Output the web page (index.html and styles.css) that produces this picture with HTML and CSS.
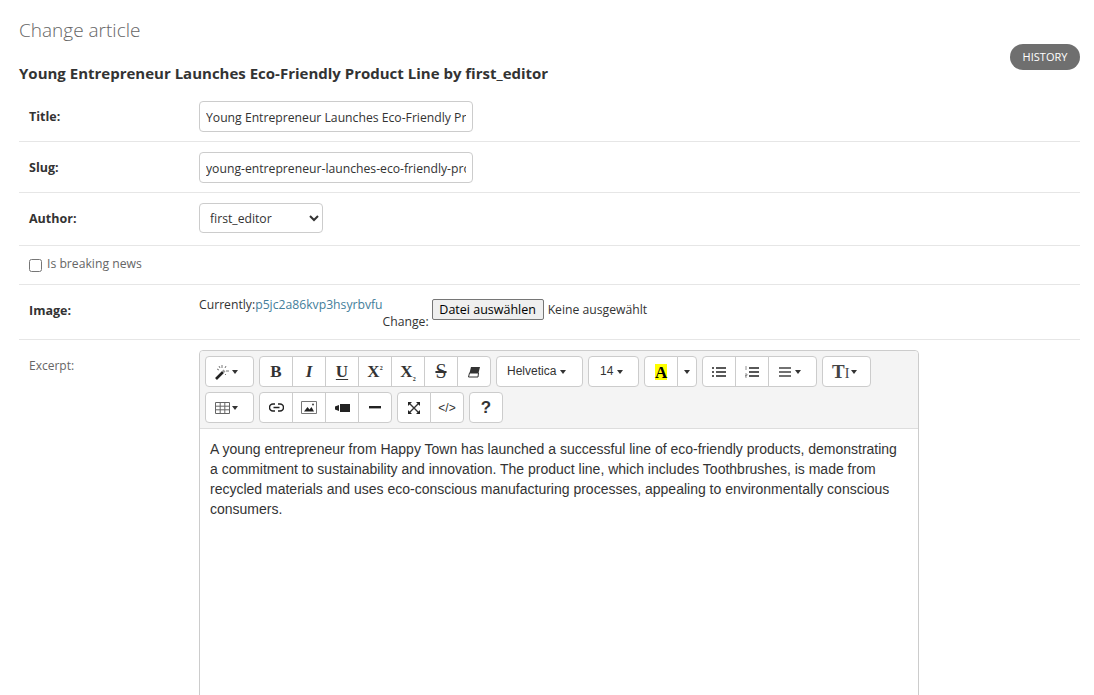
FILE: index.html
```html
<!DOCTYPE html>
<html lang="en">
<head>
    <meta charset="UTF-8">
    <meta name="viewport" content="width=device-width, initial-scale=1.0">
    <title>Change article</title>
    <link rel="stylesheet" href="styles.css">
</head>
<body>
    <main class="content">
        <h1>Change article</h1>
        <div class="object-head">
            <h2>Young Entrepreneur Launches Eco-Friendly Product Line by first_editor</h2>
            <a class="history" href="#">HISTORY</a>
        </div>
        <form>
            <div class="row">
                <label class="required" for="title">Title:</label>
                <input class="text-input" type="text" id="title" value="Young Entrepreneur Launches Eco-Friendly Product Line">
            </div>
            <div class="row">
                <label class="required" for="slug">Slug:</label>
                <input class="text-input" type="text" id="slug" value="young-entrepreneur-launches-eco-friendly-product-line">
            </div>
            <div class="row row-author">
                <label class="required" for="author">Author:</label>
                <select class="select-input" id="author">
                    <option>first_editor</option>
                </select>
            </div>
            <div class="row row-check">
                <input type="checkbox" id="breaking">
                <label for="breaking">Is breaking news</label>
            </div>
            <div class="row row-image">
                <label class="required">Image:</label>
                <div class="file-field">
                    <span class="current">Currently:</span><a class="current" href="#">p5jc2a86kvp3hsyrbvfu</a>
                    <span class="change">Change:</span>
                    <button class="file-button" type="button">Datei auswählen</button>
                    <span class="file-name">Keine ausgewählt</span>
                </div>
            </div>
            <div class="row row-excerpt">
                <label>Excerpt:</label>
                <div class="editor">
                    <div class="toolbar">
                        <div class="btn-group">
                            <button class="btn btn-wide" type="button">
                                <svg width="15" height="16" viewBox="0 0 15 16"><path d="M1 15 8 8" stroke="#222" stroke-width="2.600"/><path d="M8 8 9.500 6.500" stroke="#999" stroke-width="2.600"/><path d="M7 1v3M11 2l-1 2M11 7h3M2 5l2 1M10 10l1 1M4 2l1 2" stroke="#777" stroke-width="1"/></svg>
                                <i class="caret"></i>
                            </button>
                        </div>
                        <div class="btn-group">
                            <button class="btn glyph" type="button"><b>B</b></button>
                            <button class="btn glyph" type="button"><b><i>I</i></b></button>
                            <button class="btn glyph" type="button"><b class="under">U</b></button>
                            <button class="btn glyph" type="button"><b>X<sup>2</sup></b></button>
                            <button class="btn glyph" type="button"><b>X<sub>2</sub></b></button>
                            <button class="btn glyph" type="button"><span class="strike">S</span></button>
                            <button class="btn" type="button">
                                <svg width="14" height="12" viewBox="0 0 14 12"><path d="M4 1h9l-1.500 6H2.500z" fill="#333"/><path d="M2.500 7h9L11 11H1.500z" fill="#fff" stroke="#333"/></svg>
                            </button>
                        </div>
                        <div class="btn-group">
                            <button class="btn btn-font" type="button"><span class="btn-label">Helvetica</span> <i class="caret"></i></button>
                        </div>
                        <div class="btn-group">
                            <button class="btn btn-size" type="button"><span class="btn-label">14</span> <i class="caret"></i></button>
                        </div>
                        <div class="btn-group">
                            <button class="btn glyph" type="button"><b class="hilite">A</b></button>
                            <button class="btn btn-more" type="button"><i class="caret"></i></button>
                        </div>
                        <div class="btn-group">
                            <button class="btn" type="button">
                                <svg width="14" height="12" viewBox="0 0 14 12"><path d="M0 2h2M0 6h2M0 10h2M4 2h10M4 6h10M4 10h10" stroke="#222" stroke-width="1.600"/></svg>
                            </button>
                            <button class="btn" type="button">
                                <svg width="14" height="12" viewBox="0 0 14 12"><path d="M4 2h10M4 6h10M4 10h10" stroke="#222" stroke-width="1.600"/><path d="M1 0v4M0 8h2v1.500H0V11h2" stroke="#777" stroke-width=".8" fill="none"/></svg>
                            </button>
                            <button class="btn btn-align" type="button">
                                <svg width="12" height="10" viewBox="0 0 12 10"><path d="M0 1h12M0 5h12M0 9h12" stroke="#444" stroke-width="1.500"/></svg>
                                <i class="caret"></i>
                            </button>
                        </div>
                        <div class="btn-group">
                            <button class="btn btn-wide glyph" type="button"><span class="t-height">T<small>I</small></span> <i class="caret"></i></button>
                        </div>
                        <div class="btn-group">
                            <button class="btn btn-wide" type="button">
                                <svg width="15" height="12" viewBox="0 0 15 12"><path d="M.5.500h14v11H.5zM.5 4.200h14M.5 7.800h14M5.200.500v11M9.800.500v11" fill="none" stroke="#666"/></svg>
                                <i class="caret"></i>
                            </button>
                        </div>
                        <div class="btn-group">
                            <button class="btn" type="button">
                                <svg width="15" height="9" viewBox="0 0 15 9"><path d="M6 1H4a3.500 3.500 0 0 0 0 7h2M9 1h2a3.500 3.500 0 0 1 0 7H9M4.500 4.500h6" fill="none" stroke="#222" stroke-width="1.500"/></svg>
                            </button>
                            <button class="btn" type="button">
                                <svg width="16" height="13" viewBox="0 0 16 13"><path d="M.5.500h15v12H.5z" fill="none" stroke="#777"/><path d="M3 10.500 6.500 6l2 2.500L10.500 6l2.500 4.500z" fill="#222"/><circle cx="12" cy="3.500" r="1" fill="#444"/></svg>
                            </button>
                            <button class="btn" type="button">
                                <svg width="15" height="8" viewBox="0 0 15 8"><rect x="5" width="10" height="8" fill="#222"/><path d="M0 2.500 4 1v6L0 5.500z" fill="#222"/></svg>
                            </button>
                            <button class="btn" type="button">
                                <svg width="12" height="3" viewBox="0 0 12 3"><rect width="12" height="2.400" fill="#222"/></svg>
                            </button>
                        </div>
                        <div class="btn-group">
                            <button class="btn" type="button">
                                <svg width="12" height="12" viewBox="0 0 12 12"><path d="M1.500 1.500l9 9M10.500 1.500l-9 9" stroke="#333" stroke-width="1.400"/><path d="M0 0h4L0 4zM12 0H8l4 4zM0 12h4l-4-4zM12 12H8l4-4z" fill="#222"/></svg>
                            </button>
                            <button class="btn code" type="button">&lt;/&gt;</button>
                        </div>
                        <div class="btn-group">
                            <button class="btn help" type="button">?</button>
                        </div>
                    </div>
                    <div class="editable">
                        A young entrepreneur from Happy Town has launched a successful line of eco-friendly products, demonstrating a commitment to sustainability and innovation. The product line, which includes Toothbrushes, is made from recycled materials and uses eco-conscious manufacturing processes, appealing to environmentally conscious consumers.
                    </div>
                </div>
            </div>
        </form>
    </main>
</body>
</html>
```

FILE: styles.css
```css
html, body {
    height: 695px;
    overflow: hidden;
}

body {
    margin: 0;
    background: #fff;
    color: #333;
    font-family: "Open Sans", Arial, sans-serif;
    font-size: 12.2px;
}

.content {
    padding: 0 14px 0 19px;
}

h1 {
    margin: 0;
    padding-top: 17px;
    height: 27px;
    font-size: 19px;
    line-height: 26px;
    font-weight: 300;
    color: #666;
}

.object-head {
    display: flex;
    justify-content: space-between;
    align-items: flex-start;
    height: 47px;
}

h2 {
    margin: 20px 0 0;
    font-size: 15px;
    line-height: 18px;
    font-weight: 700;
    color: #333;
}

.history {
    display: block;
    width: 70px;
    height: 26px;
    border-radius: 13px;
    background: #6f6f6f;
    color: #fff;
    font-size: 11px;
    line-height: 26px;
    text-align: center;
    text-decoration: none;
}

.row {
    display: flex;
    align-items: flex-start;
    padding: 10px 10px 9px;
    border-bottom: 1px solid #e6e6e6;
}

.row > label {
    flex: 0 0 170px;
    line-height: 31px;
    color: #666;
}

.row > label.required {
    font-size: 12.500px;
    font-weight: 700;
    color: #333;
}

.text-input {
    box-sizing: border-box;
    width: 274px;
    height: 31px;
    padding: 2px 6px 0;
    border: 1px solid #ccc;
    border-radius: 4px;
    font-family: inherit;
    font-size: 12.2px;
    color: #333;
}

.select-input {
    box-sizing: border-box;
    width: 124px;
    height: 30px;
    padding: 0 6px;
    border: 1px solid #ccc;
    border-radius: 4px;
    background-color: #fff;
    font-family: inherit;
    font-size: 12.2px;
    color: #333;
}

.row-author {
    padding-bottom: 11px;
}

.row-check {
    align-items: center;
    box-sizing: border-box;
    height: 39px;
    padding-top: 0;
    padding-bottom: 0;
}

.row-check input {
    width: 13px;
    height: 13px;
    margin: 1px 5px 0 0;
}

.row-check label {
    flex: none;
    line-height: 18px;
    margin-top: -3px;
}

.row-image {
    padding-bottom: 8px;
}

.file-field {
    display: flex;
    align-items: flex-start;
    line-height: 18px;
}

.file-field a {
    color: #447e9b;
    text-decoration: none;
}

.current {
    margin-top: 1px;
}

.change {
    margin-top: 18px;
    margin-right: 3px;
}

.file-button {
    box-sizing: border-box;
    height: 21px;
    width: 112px;
    margin-top: 4px;
    padding: 0;
    border: 1px solid #767676;
    border-radius: 2px;
    background: #efefef;
    font-family: "Open Sans", Arial, sans-serif;
    font-size: 12.500px;
    color: #000;
}

.file-name {
    margin: 6px 0 0 4px;
}

.row-excerpt {
    border-bottom: none;
}

.row-excerpt > label {
    line-height: 31px;
    font-size: 12px;
}

.editor {
    width: 720px;
    box-sizing: border-box;
    border: 1px solid #ccc;
    border-radius: 4px 4px 0 0;
}

.toolbar {
    display: flex;
    flex-wrap: wrap;
    gap: 5px;
    padding: 5px;
    background: #f4f4f4;
    border-bottom: 1px solid #ddd;
    border-radius: 4px 4px 0 0;
}

.btn-group {
    display: flex;
}

.btn {
    display: flex;
    align-items: center;
    justify-content: center;
    box-sizing: border-box;
    width: 34px;
    height: 31px;
    margin-left: -1px;
    padding: 0;
    border: 1px solid #ccc;
    background: #fff;
    color: #333;
    font-family: "Liberation Sans", Arial, sans-serif;
    font-size: 12px;
}

.btn:first-child {
    margin-left: 0;
    border-radius: 4px 0 0 4px;
}

.btn:last-child {
    border-radius: 0 4px 4px 0;
}

.btn:only-child {
    border-radius: 4px;
}

.btn.btn-wide {
    width: 49px;
    justify-content: flex-start;
    gap: 2px;
    padding-left: 9px;
}

.btn.btn-font {
    width: 87px;
    justify-content: flex-start;
    gap: 4px;
    padding-left: 10px;
}

.btn.btn-size {
    width: 51px;
    justify-content: flex-start;
    gap: 4px;
    padding-left: 11px;
}

.btn.btn-more {
    width: 20px;
}

.btn.btn-align {
    width: 49px;
    justify-content: flex-start;
    gap: 4px;
    padding-left: 10px;
}

.btn-label {
    margin-top: -2px;
}

.caret {
    width: 0;
    height: 0;
    border-top: 4px solid #333;
    border-left: 3px solid transparent;
    border-right: 3px solid transparent;
}

.glyph {
    font-family: "Liberation Serif", serif;
    font-size: 17px;
}

.glyph sup,
.glyph sub {
    font-size: 6px;
    line-height: 0;
}

.under {
    text-decoration: underline;
    text-decoration-thickness: 1px;
    text-underline-offset: 2px;
}

.strike {
    text-decoration: line-through;
    font-size: 20px;
}

.hilite {
    display: block;
    width: 12px;
    height: 16px;
    background: #ff0;
    color: #000;
    line-height: 17px;
    text-align: center;
}

.t-height {
    font-weight: 700;
    color: #444;
    font-size: 19px;
}

.t-height small {
    font-size: 14px;
    font-weight: 400;
}

.code {
    font-size: 12px;
}

.help {
    font-size: 17px;
    font-weight: 700;
}

.editable {
    height: 360px;
    padding: 10px;
    font-family: "Liberation Sans", Arial, sans-serif;
    font-size: 14px;
    line-height: 20px;
    color: #333;
}
```
